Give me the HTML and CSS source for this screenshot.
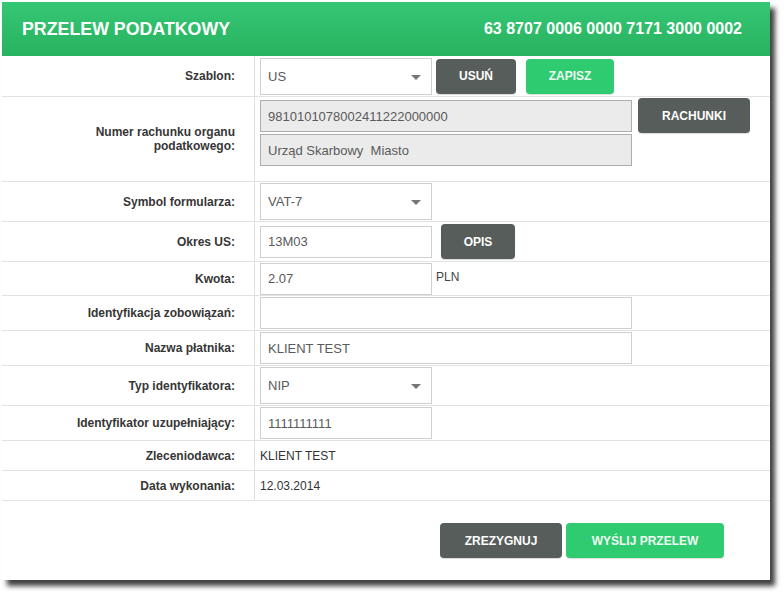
FILE: index.html
```html
<!DOCTYPE html>
<html lang="pl">

<head>
    <meta charset="UTF-8">
    <meta name="viewport" content="width=device-width, initial-scale=1.0">
    <title>Przelew podatkowy</title>
    <link rel="stylesheet" href="styles.css">
</head>

<body>

    <div class="panel">
        <div class="header">
            <h1>PRZELEW PODATKOWY</h1>
            <span class="account">63 8707 0006 0000 7171 3000 0002</span>
        </div>

        <div class="row r41">
            <div class="label">Szablon:</div>
            <div class="value">
                <div class="select">US</div>
                <button class="btn dark w80 ml4">USUŃ</button>
                <button class="btn green w88 ml10">ZAPISZ</button>
            </div>
        </div>

        <div class="row r85">
            <div class="label">Numer rachunku organu<br>podatkowego:</div>
            <div class="value top">
                <div class="stack">
                    <div class="input wide disabled">9810101078002411222000000</div>
                    <div class="input wide disabled">Urząd Skarbowy&nbsp; Miasto</div>
                </div>
                <button class="btn dark w112 ml6 up">RACHUNKI</button>
            </div>
        </div>

        <div class="row r40">
            <div class="label">Symbol formularza:</div>
            <div class="value">
                <div class="select">VAT-7</div>
            </div>
        </div>

        <div class="row r40">
            <div class="label">Okres US:</div>
            <div class="value">
                <div class="input">13M03</div>
                <button class="btn dark w74 ml9">OPIS</button>
            </div>
        </div>

        <div class="row r34">
            <div class="label">Kwota:</div>
            <div class="value">
                <div class="input">2.07</div>
                <span class="unit">PLN</span>
            </div>
        </div>

        <div class="row r35">
            <div class="label">Identyfikacja zobowiązań:</div>
            <div class="value">
                <div class="input wide"></div>
            </div>
        </div>

        <div class="row r35">
            <div class="label">Nazwa płatnika:</div>
            <div class="value">
                <div class="input wide">KLIENT TEST</div>
            </div>
        </div>

        <div class="row r40">
            <div class="label">Typ identyfikatora:</div>
            <div class="value">
                <div class="select">NIP</div>
            </div>
        </div>

        <div class="row r35">
            <div class="label">Identyfikator uzupełniający:</div>
            <div class="value">
                <div class="input">1111111111</div>
            </div>
        </div>

        <div class="row r30">
            <div class="label">Zleceniodawca:</div>
            <div class="value text">KLIENT TEST</div>
        </div>

        <div class="row r30">
            <div class="label">Data wykonania:</div>
            <div class="value text">12.03.2014</div>
        </div>

        <div class="footer">
            <button class="btn dark w122">ZREZYGNUJ</button>
            <button class="btn green w158">WYŚLIJ PRZELEW</button>
        </div>
    </div>

</body>

</html>
```

FILE: styles.css
```css
html,
body {
    height: 100%;
}

body {
    margin: 0;
    padding: 0;
    background-color: white;
    font-family: "Liberation Sans", Arial, sans-serif;
}

.panel {
    margin: 2px 0 0 2px;
    width: 768px;
    height: 578px;
    background-color: white;
    box-shadow: 5px 6px 5px rgba(0, 0, 0, 0.75);
}

.header {
    height: 54px;
    box-sizing: border-box;
    padding: 0 28px 0 20px;
    display: flex;
    justify-content: space-between;
    align-items: center;
    background: linear-gradient(#35c775, #28b25f);
    color: white;
}

.header h1 {
    margin: 0;
    font-size: 17.8px;
    font-weight: bold;
}

.account {
    font-size: 16px;
    font-weight: bold;
}

.row {
    display: grid;
    grid-template-columns: 253px 1fr;
    box-sizing: border-box;
    border-bottom: 1px solid #e2e2e2;
}

.r30 { height: 30px; }
.r34 { height: 34px; }
.r35 { height: 35px; }
.r40 { height: 40px; }
.r41 { height: 41px; }
.r85 { height: 85px; }

.label {
    display: flex;
    align-items: center;
    justify-content: flex-end;
    text-align: right;
    padding-right: 19px;
    border-right: 1px solid #e0e0e0;
    font-size: 12px;
    font-weight: bold;
    color: #363636;
    line-height: 14px;
}

.value {
    display: flex;
    align-items: center;
    padding-left: 5px;
}

.value.top {
    align-items: flex-start;
    padding-top: 3px;
}

.value.text {
    font-size: 12px;
    color: #333;
}

.stack {
    display: flex;
    flex-direction: column;
    gap: 2px;
}

.input,
.select {
    box-sizing: border-box;
    width: 172px;
    height: 32px;
    padding: 0 7px;
    display: flex;
    align-items: center;
    border: 1px solid #cfcfcf;
    background-color: white;
    font-size: 13px;
    color: #5a5a5a;
}

.select {
    position: relative;
    height: 37px;
}

.select::after {
    content: "";
    position: absolute;
    right: 10px;
    top: 16px;
    border-left: 5px solid transparent;
    border-right: 5px solid transparent;
    border-top: 5px solid #777;
}

.input.wide {
    width: 372px;
}

.input.disabled {
    background-color: #ebebeb;
    border-color: #adadad;
}

.unit {
    margin-left: 4px;
    font-size: 12px;
    color: #444;
    align-self: flex-start;
    margin-top: 8px;
}

.btn {
    height: 35px;
    border: none;
    border-radius: 4px;
    font-family: "Liberation Sans", Arial, sans-serif;
    font-size: 12px;
    font-weight: bold;
    color: white;
    padding: 0;
    box-shadow: 0 1px 1px rgba(0, 0, 0, 0.15);
}

.btn.dark {
    background-color: #575d5a;
}

.btn.green {
    background-color: #2ecb70;
    color: #eefaf2;
}

.btn.up {
    margin-top: -2px;
}

.w74 { width: 74px; }
.w80 { width: 80px; }
.w88 { width: 88px; }
.w112 { width: 112px; }
.w122 { width: 122px; }
.w158 { width: 158px; }

.ml4 { margin-left: 4px; }
.ml6 { margin-left: 6px; }
.ml9 { margin-left: 9px; }
.ml10 { margin-left: 10px; }

.footer {
    display: flex;
    justify-content: flex-end;
    gap: 4px;
    padding: 22px 46px 0 0;
}
```
